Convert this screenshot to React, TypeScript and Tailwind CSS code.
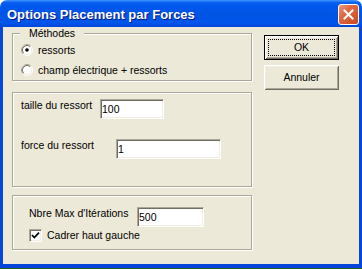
import React from "react";

const sunken =
  "border border-t-[#ACA899] border-l-[#ACA899] border-b-white border-r-white shadow-[inset_1px_1px_0_#716F64,inset_-1px_-1px_0_#F1EFE2]";

const etched =
  "border border-[#ACA899] shadow-[inset_1px_1px_0_#FFFFFF,1px_1px_0_#FFFFFF]";

const Radio = ({ checked }: { checked?: boolean }) => (
  <svg width="12" height="12" viewBox="0 0 12 12" className="shrink-0">
    <circle cx="6" cy="6" r="5" fill="#FFFFFF" />
    {/* outer ring */}
    <path d="M2.11 9.89 A5.5 5.5 0 0 1 9.89 2.11" fill="none" stroke="#ACA899" strokeWidth="1" />
    <path d="M9.89 2.11 A5.5 5.5 0 0 1 2.11 9.89" fill="none" stroke="#FFFFFF" strokeWidth="1" />
    {/* inner ring */}
    <path d="M2.82 9.18 A4.5 4.5 0 0 1 9.18 2.82" fill="none" stroke="#716F64" strokeWidth="1" />
    <path d="M9.18 2.82 A4.5 4.5 0 0 1 2.82 9.18" fill="none" stroke="#F1EFE2" strokeWidth="1" />
    {checked && <circle cx="6" cy="6" r="1.8" fill="#000000" />}
  </svg>
);

const Checkbox = ({ checked }: { checked?: boolean }) => (
  <div className={`w-[13px] h-[13px] bg-white shrink-0 flex items-center justify-center ${sunken}`}>
    {checked && (
      <svg width="9" height="9" viewBox="0 0 9 9">
        <path d="M1 4 L3.3 6.5 L8 1.6" fill="none" stroke="#000000" strokeWidth="1.8" />
      </svg>
    )}
  </div>
);

const TextBox = ({ value, width }: { value: string; width: string }) => (
  <div className={`${width} h-[20px] bg-white flex items-center pl-[1px] text-black ${sunken}`}>
    {value}
  </div>
);

export default function App() {
  return (
    <div className="w-[362px] h-[269px] flex flex-col text-[10.5px] leading-[13px] text-black [font-family:'Liberation_Sans',Arial,sans-serif]">
      {/* Title bar */}
      <div className="h-[27px] shrink-0 flex items-center justify-between pl-[7px] pr-[3px] pt-[1px] rounded-t-[7px] bg-[linear-gradient(to_bottom,#3D95FF_0%,#0A5FF0_10%,#0058EE_22%,#0054E3_55%,#0055EB_85%,#0047D6_100%)]">
        <span className="text-white font-bold text-[13px] [text-shadow:1px_1px_#0A1883]">
          Options Placement par Forces
        </span>
        <div className="w-[21px] h-[21px] rounded-[3px] border border-white flex items-center justify-center bg-[linear-gradient(135deg,#EE9A7E_0%,#E06A45_35%,#CC4620_100%)]">
          <svg width="11" height="11" viewBox="0 0 11 11">
            <path d="M1.5 1.5 L9.5 9.5 M9.5 1.5 L1.5 9.5" stroke="#FFFFFF" strokeWidth="2" strokeLinecap="square" />
          </svg>
        </div>
      </div>

      {/* Body */}
      <div className="flex-1 flex bg-[#ECE9D8] border-l-[3px] border-r-[3px] border-b-[4px] border-[#0846D9] pl-[9px] pt-[6px]">
        {/* Left column */}
        <div className="w-[240px] flex flex-col">
          <div className={`relative h-[48px] pl-[8px] pt-[6px] ${etched}`}>
            <span className="absolute top-[-7px] left-[7px] px-[9px] bg-[#ECE9D8]">Méthodes</span>
            <div className="h-[20px] flex items-center gap-[5px]">
              <Radio checked />
              <span>ressorts</span>
            </div>
            <div className="h-[20px] flex items-center gap-[5px]">
              <Radio />
              <span>champ électrique + ressorts</span>
            </div>
          </div>

          <div className={`mt-[11px] h-[95px] pl-[8px] pt-[6px] ${etched}`}>
            <div className="flex items-start">
              <span className="w-[79px]">taille du ressort</span>
              <TextBox value="100" width="w-[64px]" />
            </div>
            <div className="flex items-start mt-[20px]">
              <span className="w-[95px]">force du ressort</span>
              <TextBox value="1" width="w-[105px]" />
            </div>
          </div>

          <div className={`mt-[8px] h-[55px] pl-[16px] pt-[11px] ${etched}`}>
            <div className="flex items-start">
              <span className="w-[108px]">Nbre Max d'Itérations</span>
              <TextBox value="500" width="w-[67px]" />
            </div>
            <div className="flex items-center gap-[5px] mt-[2px]">
              <Checkbox checked />
              <span>Cadrer haut gauche</span>
            </div>
          </div>
        </div>

        {/* Right column */}
        <div className="ml-[12px] pt-[2px] flex flex-col gap-[5px]">
          <div className="w-[75px] h-[25px] border border-black bg-[#ECE9D8] shadow-[inset_1px_1px_0_#FFFFFF,inset_-1px_-1px_0_#716F64,inset_2px_2px_0_#F1EFE2,inset_-2px_-2px_0_#ACA899] p-[3px]">
            <div className="w-full h-full border border-dotted border-black flex items-center justify-center">
              OK
            </div>
          </div>
          <div className="w-[75px] h-[25px] bg-[#ECE9D8] flex items-center justify-center shadow-[inset_1px_1px_0_#FFFFFF,inset_-1px_-1px_0_#716F64,inset_2px_2px_0_#F1EFE2,inset_-2px_-2px_0_#ACA899]">
            Annuler
          </div>
        </div>
      </div>
      <div className="h-[1px] bg-[#2E5C2A]" />
    </div>
  );
}
